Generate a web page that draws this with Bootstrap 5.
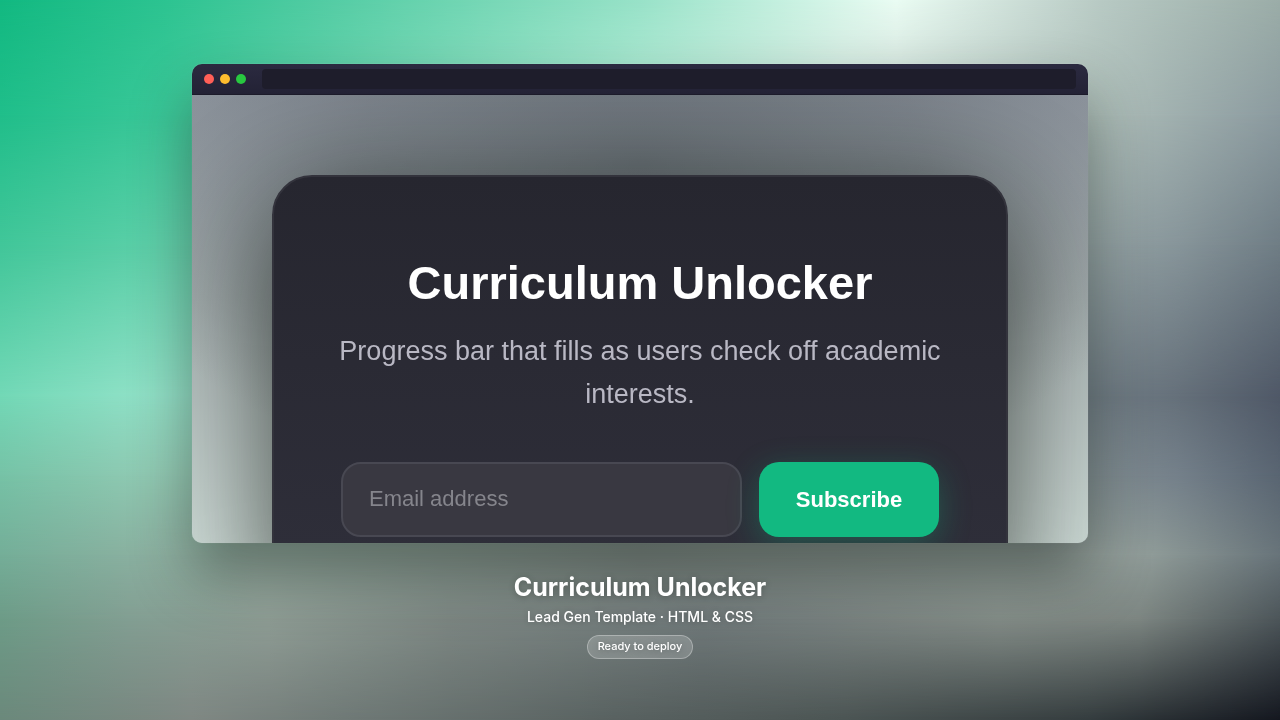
<!DOCTYPE html>
<html lang="en">
<head>
<meta charset="utf-8">
<meta name="viewport" content="width=device-width, initial-scale=1">
<title>Curriculum Unlocker</title>
<link href="https://cdn.jsdelivr.net/npm/bootstrap@5.3.0/dist/css/bootstrap.min.css" rel="stylesheet">
<style>
  body { font-family: Inter, "Liberation Sans", sans-serif; background: #6b7371; }

  /* Backdrop: horizontal colour bands, each fading in below the previous one */
  .backdrop { z-index: -1; overflow: hidden; }
  .band { position: absolute; inset: 0; }
  .band-1 { background: linear-gradient(90deg, #12b981 0%, #2dc491 13%, #52cca3 25%, #98e2c8 50%, #eafcf3 70%, #b8cac4 86%, #9bada8 100%); }
  .band-2 { background: linear-gradient(90deg, #20be8a 0%, #3bc899 13%, #62d3ab 25%, #b8eed9 50%, #d3e3dc 66%, #aebeb9 86%, #8b9a9f 100%);
            mask-image: linear-gradient(transparent 0%, #000 16%); -webkit-mask-image: linear-gradient(transparent 0%, #000 16%); }
  .band-3 { background: linear-gradient(90deg, #41c699 0%, #58cea6 10%, #84dabd 25%, #a0aeac 80%, #87959a 92%, #6f7d85 100%);
            mask-image: linear-gradient(transparent 16%, #000 34%); -webkit-mask-image: linear-gradient(transparent 16%, #000 34%); }
  .band-4 { background: linear-gradient(90deg, #72d8b6 0%, #8bdfc4 9%, #a0e2cc 20%, #7c888f 80%, #65707a 92%, #4f5867 100%);
            mask-image: linear-gradient(transparent 34%, #000 55%); -webkit-mask-image: linear-gradient(transparent 34%, #000 55%); }
  .band-5 { background: linear-gradient(90deg, #76c2a6 0%, #8bc8b0 9%, #a2ccba 20%, #8b9796 80%, #74808a 92%, #596572 100%);
            mask-image: linear-gradient(transparent 55%, #000 66%); -webkit-mask-image: linear-gradient(transparent 55%, #000 66%); }
  .band-6 { background: linear-gradient(90deg, #74ae98 0%, #87b09f 9%, #9cb2a7 20%, #858e8a 50%, #939e9a 84%, #8f9b98 90%, #68747a 100%);
            mask-image: linear-gradient(transparent 66%, #000 77%); -webkit-mask-image: linear-gradient(transparent 66%, #000 77%); }
  .band-7 { background: linear-gradient(90deg, #6d9b87 0%, #829e92 10%, #8f9d95 21%, #7d8783 35%, #70797a 55%, #848d88 78%, #7c8581 89%, #4c5559 100%);
            mask-image: linear-gradient(transparent 77%, #000 86%); -webkit-mask-image: linear-gradient(transparent 77%, #000 86%); }
  .band-8 { background: linear-gradient(90deg, #6b887b 0%, #7f8783 15%, #707a77 26%, #586160 48%, #4b5453 66%, #343c3e 85%, #14171f 100%);
            mask-image: linear-gradient(transparent 86%, #000 100%); -webkit-mask-image: linear-gradient(transparent 86%, #000 100%); }

  .showcase { padding-top: 2px; }
  .browser { width: 70%; border-radius: 10px; box-shadow: 0 32px 60px rgba(20, 30, 25, .46), 0 0 1px rgba(255, 255, 255, .5); }
  .browser-bar { height: 31px; padding: 0 12px; background: linear-gradient(#2b2a40, #232235); border-bottom: 1px solid #1c1b2a; }
  .dots { gap: 6px; }
  .dot { width: 10px; height: 10px; border-radius: 50%; }
  .dot-red { background: #ff5f57; }
  .dot-yellow { background: #febc2e; }
  .dot-green { background: #28c840; }
  .address { height: 20px; margin-left: 16px; border-radius: 4px; background: #1e1d2b; }

  .screen { aspect-ratio: 2 / 1; padding: 80px 80px 0; font-family: "Liberation Sans", Arial, sans-serif;
            background: radial-gradient(ellipse 64% 75% at 50% 15%, rgba(60, 68, 74, .5), rgba(60, 68, 74, .3) 50%, transparent), linear-gradient(#969da6, #a9b2b3 45%, #d0ddd9); }
  .unlock-card { padding: 78px 61px 76px; border: 2px solid #33333c; border-radius: 40px;
                 background: linear-gradient(#26262f, #2e2e39 370px); box-shadow: 0 28px 120px rgba(10, 15, 10, .7); }
  .unlock-title { font-size: 47px; line-height: 56px; margin-bottom: 19px; }
  .unlock-text { font-size: 27px; line-height: 43px; margin-bottom: 46px; color: #b9b8c4; }
  .subscribe-form { gap: 17px; padding: 0 6px; }
  .email, .email:focus { height: 75px; padding: 0 26px; font-size: 22px; color: #fff; background: #393841; border: 2px solid #484852; border-radius: 20px; }
  .email::placeholder { color: #85858c; opacity: 1; }
  .subscribe { width: 180px; height: 75px; font-size: 22px; border-radius: 20px; --bs-btn-bg: #12b981; --bs-btn-color: #fff;
               --bs-btn-hover-bg: #0ea975; --bs-btn-hover-color: #fff; box-shadow: 0 8px 32px rgba(18, 185, 129, .3); }

  .caption-block { margin-top: 28px; color: #fff; text-shadow: 0 1px 6px rgba(0, 0, 0, .25); }
  .caption-title { font-size: 25px; line-height: 32px; }
  .caption-sub { font-size: 14px; line-height: 20px; }
  .pill { height: 24px; padding: 0 10px; font-size: 11px; background: rgba(255, 255, 255, .18); border: 1px solid rgba(255, 255, 255, .3); }
</style>
</head>
<body>
<div class="backdrop position-fixed top-0 start-0 w-100 h-100" aria-hidden="true">
  <div class="band band-1"></div><div class="band band-2"></div><div class="band band-3"></div><div class="band band-4"></div>
  <div class="band band-5"></div><div class="band band-6"></div><div class="band band-7"></div><div class="band band-8"></div>
</div>
<main class="showcase min-vh-100 d-flex flex-column align-items-center justify-content-center">
  <section class="browser overflow-hidden">
    <div class="browser-bar d-flex align-items-center">
      <div class="dots d-flex flex-shrink-0">
        <span class="dot dot-red"></span><span class="dot dot-yellow"></span><span class="dot dot-green"></span>
      </div>
      <div class="address flex-grow-1"></div>
    </div>
    <div class="screen overflow-hidden">
      <div class="unlock-card text-center">
        <h1 class="unlock-title fw-bold text-white">Curriculum Unlocker</h1>
        <p class="unlock-text">Progress bar that fills as users check off academic interests.</p>
        <form class="subscribe-form d-flex">
          <input type="email" class="form-control email" placeholder="Email address" aria-label="Email address">
          <button type="button" class="btn subscribe fw-bold flex-shrink-0">Subscribe</button>
        </form>
      </div>
    </div>
  </section>
  <section class="caption-block d-flex flex-column align-items-center text-center">
    <h2 class="caption-title fw-bold mb-1">Curriculum Unlocker</h2>
    <p class="caption-sub fw-medium mb-2">Lead Gen Template · HTML &amp; CSS</p>
    <span class="pill rounded-pill fw-medium d-inline-flex align-items-center">Ready to deploy</span>
  </section>
</main>
<script src="https://cdn.jsdelivr.net/npm/bootstrap@5.3.0/dist/js/bootstrap.bundle.min.js"></script>
</body>
</html>
